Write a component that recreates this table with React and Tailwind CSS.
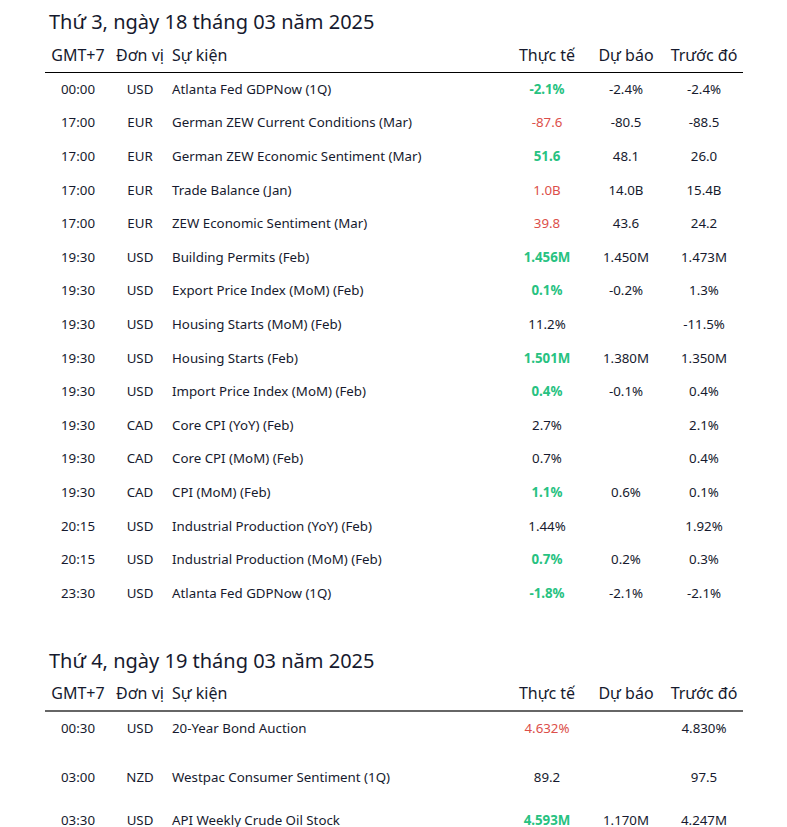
const GREEN = 'text-[#27c281] font-bold';
const RED = 'text-[#dc4f4a]';

const day1 = [
  ['00:00', 'USD', 'Atlanta Fed GDPNow (1Q)', '-2.1%', 'g', '-2.4%', '-2.4%'],
  ['17:00', 'EUR', 'German ZEW Current Conditions (Mar)', '-87.6', 'r', '-80.5', '-88.5'],
  ['17:00', 'EUR', 'German ZEW Economic Sentiment (Mar)', '51.6', 'g', '48.1', '26.0'],
  ['17:00', 'EUR', 'Trade Balance (Jan)', '1.0B', 'r', '14.0B', '15.4B'],
  ['17:00', 'EUR', 'ZEW Economic Sentiment (Mar)', '39.8', 'r', '43.6', '24.2'],
  ['19:30', 'USD', 'Building Permits (Feb)', '1.456M', 'g', '1.450M', '1.473M'],
  ['19:30', 'USD', 'Export Price Index (MoM) (Feb)', '0.1%', 'g', '-0.2%', '1.3%'],
  ['19:30', 'USD', 'Housing Starts (MoM) (Feb)', '11.2%', '', '', '-11.5%'],
  ['19:30', 'USD', 'Housing Starts (Feb)', '1.501M', 'g', '1.380M', '1.350M'],
  ['19:30', 'USD', 'Import Price Index (MoM) (Feb)', '0.4%', 'g', '-0.1%', '0.4%'],
  ['19:30', 'CAD', 'Core CPI (YoY) (Feb)', '2.7%', '', '', '2.1%'],
  ['19:30', 'CAD', 'Core CPI (MoM) (Feb)', '0.7%', '', '', '0.4%'],
  ['19:30', 'CAD', 'CPI (MoM) (Feb)', '1.1%', 'g', '0.6%', '0.1%'],
  ['20:15', 'USD', 'Industrial Production (YoY) (Feb)', '1.44%', '', '', '1.92%'],
  ['20:15', 'USD', 'Industrial Production (MoM) (Feb)', '0.7%', 'g', '0.2%', '0.3%'],
  ['23:30', 'USD', 'Atlanta Fed GDPNow (1Q)', '-1.8%', 'g', '-2.1%', '-2.1%'],
];

const day2 = [
  ['00:30', 'USD', '20-Year Bond Auction', '4.632%', 'r', '', '4.830%', 'h-[34px]'],
  ['03:00', 'NZD', 'Westpac Consumer Sentiment (1Q)', '89.2', '', '', '97.5', 'h-[64px]'],
  ['03:30', 'USD', 'API Weekly Crude Oil Stock', '4.593M', 'g', '1.170M', '4.247M', 'h-[22px]'],
];

function Row({ r, h = 'h-[33.6px]' }) {
  const [time, cur, name, actual, tone, forecast, prev] = r;
  const tc = tone === 'g' ? GREEN : tone === 'r' ? RED : '';
  return (
    <div className={`flex items-center text-[13.3px] ${h}`}>
      <div className="w-[66px] text-center">{time}</div>
      <div className="w-[58px] text-center">{cur}</div>
      <div className="flex-1 pl-[3px]">{name}</div>
      <div className={`w-[80px] text-center ${tc}`}>{actual}</div>
      <div className="w-[78px] text-center">{forecast}</div>
      <div className="w-[78px] text-center">{prev}</div>
    </div>
  );
}

function Section({ title, rows, line }) {
  return (
    <section>
      <h2 className="h-[30px] pl-[4px] text-[20px] leading-[30px]">{title}</h2>
      <div className={`flex h-[36px] items-center text-[16px] ${line}`}>
        <div className="w-[66px] text-center">GMT+7</div>
        <div className="w-[58px] text-center">Đơn vị</div>
        <div className="flex-1 pl-[3px]">Sự kiện</div>
        <div className="w-[80px] text-center">Thực tế</div>
        <div className="w-[78px] text-center">Dự báo</div>
        <div className="w-[78px] text-center">Trước đó</div>
      </div>
      {rows.map((r, i) => (
        <Row key={i} r={r} h={r[7]} />
      ))}
    </section>
  );
}

export default function App() {
  return (
    <div className="w-[787px] h-[827px] overflow-hidden bg-white text-[#161a2e]" style={{ fontFamily: '"Noto Sans", "Open Sans", sans-serif' }}>
      <div className="ml-[45px] w-[698px] pt-[7px]">
        <Section title="Thứ 3, ngày 18 tháng 03 năm 2025" rows={day1} line="border-b border-black" />
        <div className="h-[35px]" />
        <Section title="Thứ 4, ngày 19 tháng 03 năm 2025" rows={day2} line="border-b-2 border-[#666]" />
      </div>
    </div>
  );
}
